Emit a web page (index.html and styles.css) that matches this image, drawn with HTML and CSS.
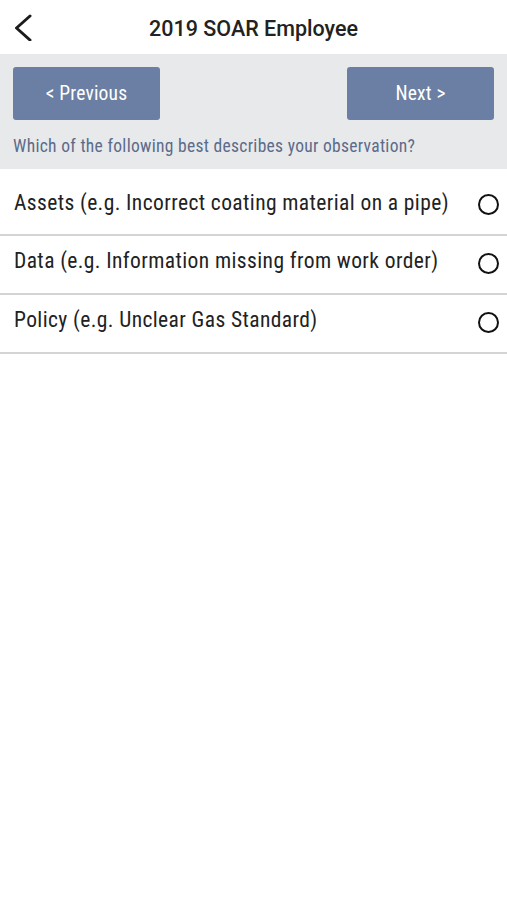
FILE: index.html
```html
<!DOCTYPE html>
<html lang="en">
<head>
    <meta charset="UTF-8">
    <meta name="viewport" content="width=device-width, initial-scale=1.0">
    <title>2019 SOAR Employee</title>
    <link rel="stylesheet" href="styles.css">
</head>
<body>
    <header class="top-bar">
        <button class="back-btn" aria-label="Back">
            <svg width="20" height="28" viewBox="0 0 20 28">
                <path d="M17 3 L3.5 15 L17 27" fill="none" stroke="#1c1c1e" stroke-width="3" stroke-linecap="round" stroke-linejoin="round"/>
            </svg>
        </button>
        <h1 class="title">2019 SOAR Employee</h1>
    </header>

    <div class="nav-panel">
        <div class="nav-buttons">
            <button class="nav-btn">&lt; Previous</button>
            <button class="nav-btn">Next &gt;</button>
        </div>
        <p class="question">Which of the following best describes your observation?</p>
    </div>

    <form class="options" id="observationForm">
        <label class="option">
            <span class="option-text">Assets (e.g. Incorrect coating material on a pipe)</span>
            <input type="radio" name="observation" value="assets">
            <span class="radio-mark"></span>
        </label>
        <label class="option">
            <span class="option-text">Data (e.g. Information missing from work order)</span>
            <input type="radio" name="observation" value="data">
            <span class="radio-mark"></span>
        </label>
        <label class="option">
            <span class="option-text">Policy (e.g. Unclear Gas Standard)</span>
            <input type="radio" name="observation" value="policy">
            <span class="radio-mark"></span>
        </label>
    </form>
</body>
</html>
```

FILE: styles.css
```css
body {
    margin: 0;
    font-family: Roboto, "Liberation Sans", sans-serif;
    background-color: #fff;
    color: #222;
}

.top-bar {
    position: relative;
    height: 54px;
    display: flex;
    align-items: center;
    justify-content: center;
}

.back-btn {
    position: absolute;
    left: 13px;
    top: 13px;
    padding: 0;
    border: none;
    background: none;
}

.title {
    margin: 2px 0 0;
    font-size: 21.5px;
    font-weight: 500;
    color: #222;
}

.nav-panel {
    background-color: #e8e9eb;
    padding: 13px 13px 13px;
}

.nav-buttons {
    display: flex;
    justify-content: space-between;
}

.nav-btn {
    width: 147px;
    height: 53px;
    border: none;
    border-radius: 3px;
    background-color: #6a7fa3;
    color: #fff;
    font-family: "Roboto Condensed", Roboto, sans-serif;
    font-stretch: condensed;
    font-size: 19.5px;
    letter-spacing: 0.2px;
}

.question {
    margin: 16px 0 0;
    font-family: "Roboto Condensed", Roboto, sans-serif;
    font-stretch: condensed;
    font-size: 17.5px;
    line-height: 20px;
    letter-spacing: 0.3px;
    color: #5b6b8a;
}

.options {
    margin: 0;
}

.option {
    box-sizing: border-box;
    display: flex;
    align-items: center;
    justify-content: space-between;
    height: 59px;
    padding: 0 8px 8px 14px;
    border-bottom: 2px solid #d4d4d4;
}

.option:first-child {
    height: 67px;
    padding-top: 9px;
}

.option-text {
    font-family: "Roboto Condensed", Roboto, sans-serif;
    font-stretch: condensed;
    font-size: 21.5px;
    letter-spacing: 0.4px;
    color: #222;
}

.option input {
    display: none;
}

.radio-mark {
    width: 17px;
    height: 17px;
    border: 2px solid #111;
    border-radius: 50%;
    margin-top: 5px;
}
```
